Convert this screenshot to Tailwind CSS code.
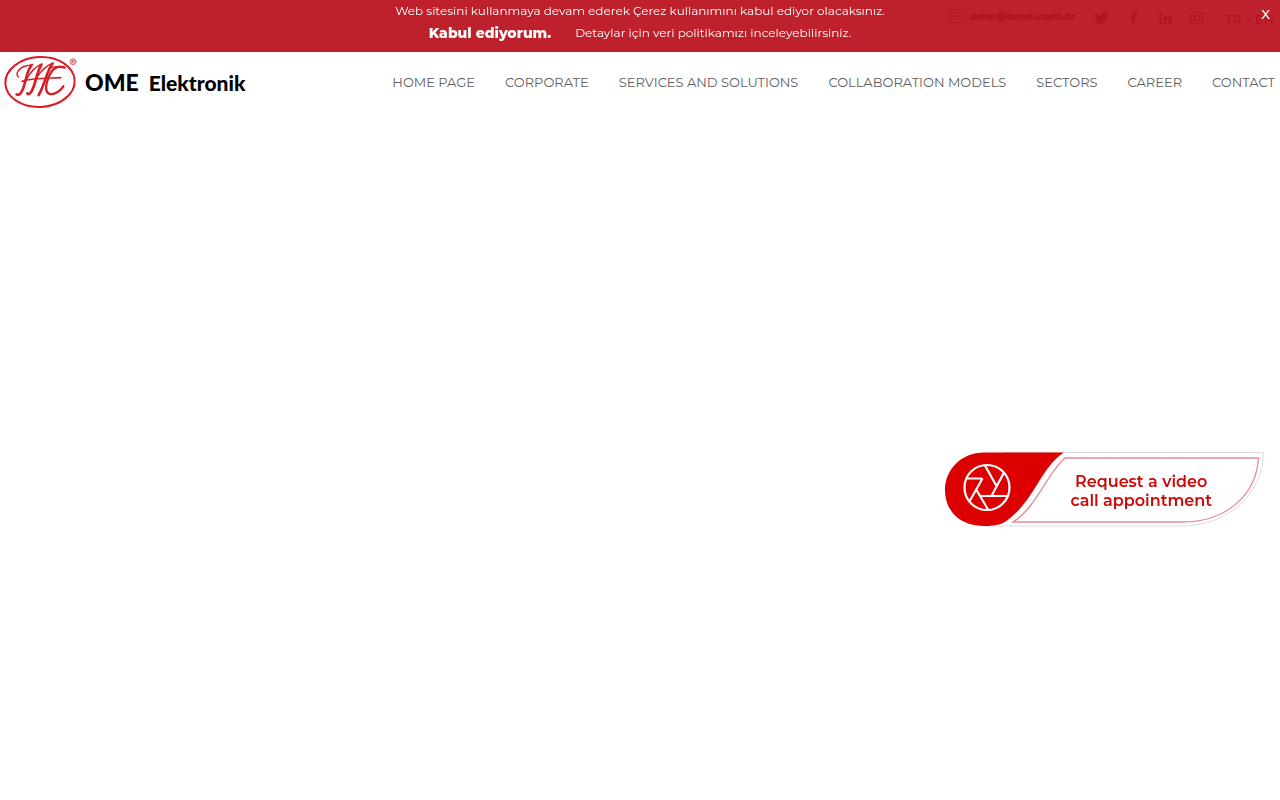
<!DOCTYPE html>
<html lang="en">
<head>
  <meta charset="UTF-8">
  <meta name="viewport" content="width=device-width, initial-scale=1.0">
  <title>OME Elektronik</title>
  <script src="https://cdn.jsdelivr.net/npm/@tailwindcss/browser@4"></script>
</head>
<body class="bg-white font-['Montserrat','Inter',sans-serif] text-[#606060]">

  <!-- Cookie notice -->
  <div id="cookie" class="fixed inset-x-0 top-0 z-20 h-[52px] bg-[#bb1421]/95 text-center text-xs leading-[22px] text-white">
    <p>Web sitesini kullanmaya devam ederek Çerez kullanımını kabul ediyor olacaksınız.</p>
    <div class="flex justify-center gap-6">
      <button type="button" class="cursor-pointer text-sm leading-[22px] font-extrabold" onclick="kapat()">Kabul ediyorum.</button>
      <a href="#">Detaylar için veri politikamızı inceleyebilirsiniz.</a>
    </div>
    <button type="button" aria-label="Kapat" class="absolute top-[3px] right-[10px] cursor-pointer text-[13px] font-medium" onclick="kapat()">X</button>
  </div>

  <header>
    <!-- Top bar -->
    <div class="flex h-[52px] items-start justify-end pt-[5px] pr-[6px] text-black">
      <a href="#" class="mr-[10px] flex h-[22px] items-center gap-[2px] text-[11px] font-black">
        <svg class="h-[14px] w-[18px]" viewBox="0 0 18 14" fill="none" stroke="currentColor"><rect x=".5" y=".5" width="17" height="13" rx="2"/><path d="M3 3l6 5 6-5M3 11l4-4M15 11l-4-4"/></svg>
        ome@ome.com.tr
      </a>
      <a href="#" aria-label="Twitter" class="flex h-[26px] w-8 items-center justify-center border-r border-black/20">
        <svg class="size-[14px]" viewBox="0 0 24 24" fill="currentColor"><path d="M24 4.6a10 10 0 0 1-2.8.8 4.900 4.900 0 0 0 2.100-2.700 10 10 0 0 1-3.100 1.200 4.900 4.900 0 0 0-8.400 4.500A14 14 0 0 1 1.700 3.200a4.900 4.900 0 0 0 1.500 6.500 4.900 4.900 0 0 1-2.200-.6c0 2.400 1.600 4.400 3.900 4.900a5 5 0 0 1-2.200.1 4.900 4.900 0 0 0 4.600 3.400A9.900 9.900 0 0 1 0 19.500 14 14 0 0 0 21.500 7.100 10 10 0 0 0 24 4.600z"/></svg>
      </a>
      <a href="#" aria-label="Facebook" class="flex h-[26px] w-8 items-center justify-center border-r border-black/20">
        <svg class="size-[13px]" viewBox="0 0 24 24" fill="currentColor"><path d="M9 24V13H5.500V9H9V6c0-4 2-6 5.500-6H18v4h-2.500C14 4 13.500 4.700 13.500 6v3H18l-.6 4h-3.900v11z"/></svg>
      </a>
      <a href="#" aria-label="LinkedIn" class="flex h-[26px] w-8 items-center justify-center border-r border-black/20">
        <svg class="size-[13px]" viewBox="0 0 24 24" fill="currentColor"><circle cx="3" cy="4" r="2.800"/><path d="M.8 9h4.600v13H.8zM8.500 9h4.400v2c1-1.600 2.600-2.300 4.500-2.300 4.300 0 5.600 2.500 5.600 6.500V22h-4.600v-6.200c0-1.800-.4-3.200-2.400-3.200s-2.900 1.400-2.900 3.200V22H8.500z"/></svg>
      </a>
      <a href="#" aria-label="Instagram" class="flex h-[26px] w-8 items-center justify-center border-r border-black/20">
        <svg class="size-[14px]" viewBox="0 0 24 24" fill="none" stroke="currentColor" stroke-width="2.200"><rect x="2" y="2" width="20" height="20" rx="6"/><circle cx="12" cy="12" r="5"/><path d="M17.500 6h1"/></svg>
      </a>
      <div class="flex gap-1 pt-[3px] pl-[11px] text-[13px] leading-[22px] font-medium">
        <a href="#">TR</a><span>-</span><a href="#">EN</a>
      </div>
    </div>

    <div class="flex h-[60px] items-center justify-between pr-[5px]">
      <a href="#" class="flex items-center font-['Lato',sans-serif] text-black">
        <svg class="h-[62px] w-[84px]" viewBox="0 0 252 186" fill="none" stroke="#d91c25" stroke-linecap="round">
          <ellipse cx="120" cy="93" rx="104" ry="75" stroke-width="6" transform="rotate(-3 120 93)"/>
          <path stroke-width="4" d="M56 78C44 70 56 50 78 45C86 43 92 43 98 40"/>
          <path stroke-width="8" d="M94 44C78 62 78 98 66 120C61 130 55 134 50 130"/>
          <path stroke-width="4" d="M79 86C92 62 106 46 126 39"/>
          <path stroke-width="8" d="M124 42C108 66 108 100 94 122C90 129 85 131 82 127"/>
          <path stroke-width="4" d="M108 82C124 58 138 43 160 36"/>
          <path stroke-width="8" d="M157 39C139 62 136 98 116 132"/>
          <path stroke-width="5" d="M66 91C100 80 146 82 182 80"/>
          <path stroke-width="7" d="M194 50C172 42 156 54 147 76C136 102 134 126 150 129C166 131 182 119 190 106"/>
          <path stroke-width="4" d="M148 52C164 44 178 46 194 50"/>
          <circle cx="219" cy="32" r="9" stroke-width="2"/>
          <path stroke-width="2" d="M216 37V27h4a2 2 0 0 1 0 5h-4M220 32l3 5"/>
        </svg>
        <span class="flex items-baseline gap-[10px] pl-px leading-[30px] font-black">
          <span class="text-[23px]">OME</span>
          <span class="text-[21px]">Elektronik</span>
        </span>
      </a>
      <nav class="flex gap-[30px] text-[13px] leading-5">
        <a href="#">HOME PAGE</a>
        <a href="#">CORPORATE</a>
        <a href="#">SERVICES AND SOLUTIONS</a>
        <a href="#">COLLABORATION MODELS</a>
        <a href="#">SECTORS</a>
        <a href="#">CAREER</a>
        <a href="#">CONTACT</a>
      </nav>
    </div>
  </header>

  <!-- Floating appointment link -->
  <a href="#" class="fixed right-4 bottom-[272px] flex h-[76px] w-80 items-center justify-end pt-[2px] pr-[52px] text-center text-[16px] leading-[19px] font-semibold text-[#cc0808]">
    <svg class="absolute inset-0 size-full" viewBox="0 0 320 76" fill="none">
      <path d="M60 .5H319.500C319 40 287 74 236 74H42" stroke="#dedada"/>
      <path d="M121 6H314.500C312 43 283 70 238 70H69C92 56 104 20 121 6Z" stroke="#e58b93" stroke-width="1.300"/>
      <path d="M40 .5H120C98 14 90 48 65 67C59 72 53 74 40 74C17 74 1 60 1 38C1 18 17 .5 40 .5Z" fill="#dc0000"/>
      <g stroke="#fff" stroke-width="2.200">
        <circle cx="43" cy="35.500" r="22.500"/>
        <path d="M22.500 26.500H38.500M26 48.500L38.500 26.500M41 13.500L52.500 34M60 20.500L47.500 44M64 44H36.500M44 57.500L32.500 38"/>
      </g>
    </svg>
    <span class="relative">Request a video<br>call appointment</span>
  </a>

  <script>
    function kapat() {
      document.querySelector("#cookie").remove();
    }
  </script>
</body>
</html>
